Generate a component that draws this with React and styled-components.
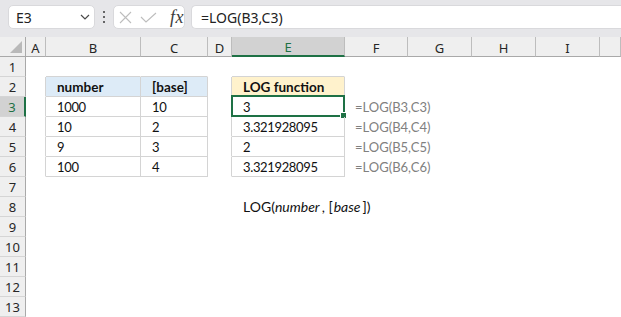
import React from 'react';
import styled, { createGlobalStyle, css } from 'styled-components';

const GlobalStyle = createGlobalStyle`
  html, body { margin: 0; padding: 0; background: #ffffff; }
  body {
    width: 621px;
    height: 317px;
    overflow: hidden;
    font-family: "Noto Sans", "Open Sans", sans-serif;
  }
`;

const GREEN = '#1e7145';
const TABLE_LINE = '#d4d4d4';

const Page = styled.div`
  display: flex;
  flex-direction: column;
  width: 621px;
  height: 317px;
  overflow: hidden;
  background: #ffffff;
`;

const Toolbar = styled.div`
  flex: none;
  height: 37px;
  box-sizing: border-box;
  padding: 5px 0 0 8px;
  background: #e6e6e9;
  display: flex;
  align-items: flex-start;
`;

const Box = styled.div`
  box-sizing: border-box;
  height: 24px;
  background: #ffffff;
  border: 1px solid #d9d9dc;
  border-radius: 5px;
  display: flex;
  align-items: center;
`;

const NameBox = styled(Box)`
  width: 101px;
  padding: 0 3px 0 7px;
  font-size: 14px;
  color: #222222;
  justify-content: space-between;
`;

const MoreDots = styled.div`
  width: 22px;
  height: 24px;
  display: flex;
  flex-direction: column;
  align-items: center;
  justify-content: center;
  gap: 3px;
  & > span {
    width: 2px;
    height: 2px;
    background: #3a3a3a;
    border-radius: 1px;
  }
`;

const ButtonGroup = styled(Box)`
  width: 72px;
  padding: 0 0 0 5px;
  gap: 0;
`;

const IconSlot = styled.span`
  display: flex;
  align-items: center;
  justify-content: center;
  width: ${p => p.$w}px;
  height: 22px;
`;

const Fx = styled.span`
  font-family: "Liberation Serif", "DejaVu Serif", serif;
  font-style: italic;
  font-size: 18px;
  color: #3c3c3c;
  line-height: 22px;
  margin-left: 6px;
  letter-spacing: 0.5px;
`;

const FormulaBox = styled(Box)`
  margin-left: 6px;
  width: 430px;
  flex: none;
  padding-left: 9px;
  font-size: 14px;
  color: #222222;
  border-right: none;
  border-radius: 5px 0 0 5px;
`;

const Sheet = styled.div`
  flex: none;
  display: grid;
  grid-template-columns: 26px 20px 95px 67px 24px 113px 63px 64px 64px 64px 1fr;
  grid-auto-rows: 20px;
`;

const HeaderCell = styled.div`
  box-sizing: border-box;
  background: ${p => (p.$selected ? '#d2d2d2' : '#efefef')};
  color: ${p => (p.$selected ? GREEN : '#262626')};
  border-right: 1px solid #bdbdbd;
  border-bottom: ${p => (p.$selected ? `2px solid ${GREEN}` : '1px solid #a9a9a9')};
  font-size: 13px;
  display: flex;
  align-items: center;
  justify-content: center;
  padding-top: 2px;
`;

const Corner = styled.div`
  box-sizing: border-box;
  background: #efefef;
  border-right: 1px solid #a9a9a9;
  border-bottom: 1px solid #a9a9a9;
  display: flex;
  align-items: flex-end;
  justify-content: flex-end;
  padding: 0 3px 3px 0;
`;

const RowHeader = styled.div`
  box-sizing: border-box;
  background: ${p => (p.$selected ? '#d2d2d2' : '#efefef')};
  color: ${p => (p.$selected ? GREEN : '#262626')};
  border-right: ${p => (p.$selected ? `2px solid ${GREEN}` : '1px solid #a9a9a9')};
  border-bottom: 1px solid #d5d5d5;
  font-size: 13px;
  display: flex;
  align-items: center;
  justify-content: center;
  padding-top: 1px;
`;

const Cell = styled.div`
  box-sizing: border-box;
  position: relative;
  border-right: 1px solid ${p => p.$lineR || 'transparent'};
  border-bottom: 1px solid ${p => p.$lineB || 'transparent'};
  ${p => p.$bg && css`background: ${p.$bg};`}
  font-family: "Lato", "Open Sans", sans-serif;
  font-size: ${p => p.$size || 13}px;
  line-height: 16px;
  font-weight: ${p => (p.$bold ? 700 : 400)};
  color: ${p => p.$color || '#111111'};
  letter-spacing: ${p => (p.$num ? '-0.35px' : 'normal')};
  white-space: nowrap;
  overflow: visible;
  display: flex;
  align-items: flex-end;
  padding-left: ${p => p.$pad ?? 11}px;
  padding-bottom: 1px;
`;

const RichText = styled.span`
  white-space: pre;
`;

const Arg = styled.i`
  font-style: italic;
  margin-left: ${p => p.$ml || 0}px;
  margin-right: 2px;
`;

const Selection = styled.div`
  position: absolute;
  top: -2px;
  left: -1px;
  right: -1px;
  bottom: -1px;
  border: 2px solid ${GREEN};
  pointer-events: none;
`;

const FillHandle = styled.div`
  position: absolute;
  right: -4px;
  bottom: -4px;
  width: 5px;
  height: 5px;
  background: ${GREEN};
  border: 1px solid #ffffff;
`;

const COLS = ['A', 'B', 'C', 'D', 'E', 'F', 'G', 'H', 'I', 'J'];
const ROWS = Array.from({ length: 13 }, (_, i) => i + 1);

const TABLES = [
  { c0: 1, c1: 2, r0: 2, r1: 6 },
  { c0: 4, c1: 4, r0: 2, r1: 6 },
];

const inTable = (c, r) => TABLES.some(t => c >= t.c0 && c <= t.c1 && r >= t.r0 && r <= t.r1);

const formula = { color: '#808080', pad: 10 };
const head = { bold: true, size: 13.5 };

const CELLS = {
  B2: { text: 'number', ...head, bg: '#ddebf7' },
  C2: { text: '[base]', ...head, bg: '#ddebf7' },
  E2: { text: 'LOG function', ...head, bg: '#fff2cc' },
  B3: { text: '1000', num: true }, C3: { text: '10', num: true }, E3: { text: '3', selected: true },
  B4: { text: '10', num: true }, C4: { text: '2' }, E4: { text: '3.321928095', num: true },
  B5: { text: '9' }, C5: { text: '3' }, E5: { text: '2' },
  B6: { text: '100', num: true }, C6: { text: '4' }, E6: { text: '3.321928095', num: true },
  F3: { text: '=LOG(B3,C3)', ...formula },
  F4: { text: '=LOG(B4,C4)', ...formula },
  F5: { text: '=LOG(B5,C5)', ...formula },
  F6: { text: '=LOG(B6,C6)', ...formula },
  E8: {
    size: 14,
    rich: (
      <RichText>
        LOG(<Arg>number</Arg>, [<Arg $ml={1}>base</Arg>])
      </RichText>
    ),
  },
};

function XIcon() {
  return (
    <svg width="13" height="13" viewBox="0 0 13 13">
      <path d="M1 1 L12 12 M12 1 L1 12" stroke="#bdbdbd" strokeWidth="1.1" fill="none" />
    </svg>
  );
}

function CheckIcon() {
  return (
    <svg width="17" height="11" viewBox="0 0 17 11">
      <path d="M1 5 L6 10 L16 1" stroke="#bdbdbd" strokeWidth="1.1" fill="none" />
    </svg>
  );
}

function Chevron() {
  return (
    <svg width="12" height="8" viewBox="0 0 12 8">
      <path d="M2 2 L6 6 L10 2" stroke="#4a4a4a" strokeWidth="1.2" fill="none" />
    </svg>
  );
}

function CornerTriangle() {
  return (
    <svg width="12" height="12" viewBox="0 0 12 12">
      <path d="M12 0 L12 12 L0 12 Z" fill="#b9b9b9" />
    </svg>
  );
}

export default function App() {
  return (
    <Page>
      <GlobalStyle />
      <Toolbar>
        <NameBox>
          <span>E3</span>
          <Chevron />
        </NameBox>
        <MoreDots>
          <span />
          <span />
          <span />
        </MoreDots>
        <ButtonGroup>
          <IconSlot $w={14}>
            <XIcon />
          </IconSlot>
          <IconSlot $w={32}>
            <CheckIcon />
          </IconSlot>
          <Fx>fx</Fx>
        </ButtonGroup>
        <FormulaBox>=LOG(B3,C3)</FormulaBox>
      </Toolbar>
      <Sheet>
        <Corner>
          <CornerTriangle />
        </Corner>
        {COLS.map(c => (
          <HeaderCell key={c} $selected={c === 'E'}>
            {c === 'J' ? '' : c}
          </HeaderCell>
        ))}
        {ROWS.map(r => (
          <React.Fragment key={r}>
            <RowHeader $selected={r === 3}>{r}</RowHeader>
            {COLS.map((c, ci) => {
              const d = CELLS[`${c}${r}`] || {};
              const lineR = inTable(ci, r) || inTable(ci + 1, r) ? TABLE_LINE : null;
              const lineB = inTable(ci, r) || inTable(ci, r + 1) ? TABLE_LINE : null;
              return (
                <Cell
                  key={c}
                  $lineR={lineR}
                  $lineB={lineB}
                  $bg={d.bg}
                  $bold={d.bold}
                  $size={d.size}
                  $color={d.color}
                  $pad={d.pad}
                  $num={d.num}
                >
                  {d.rich || d.text}
                  {d.selected && (
                    <Selection>
                      <FillHandle />
                    </Selection>
                  )}
                </Cell>
              );
            })}
          </React.Fragment>
        ))}
      </Sheet>
    </Page>
  );
}
